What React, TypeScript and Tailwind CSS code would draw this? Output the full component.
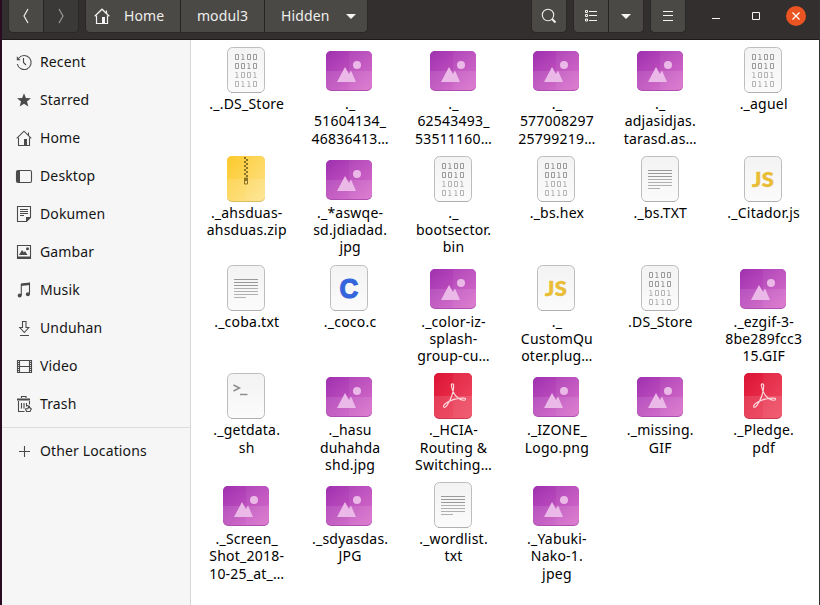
import React from "react";

type Kind = "bin" | "img" | "zip" | "txt" | "js" | "c" | "sh" | "pdf";

type FileItem = { kind: Kind; lines: string[] };

const files: FileItem[] = [
  { kind: "bin", lines: ["._.DS_Store"] },
  { kind: "img", lines: ["._", "51604134_", "46836413…"] },
  { kind: "img", lines: ["._", "62543493_", "53511160…"] },
  { kind: "img", lines: ["._", "577008297", "25799219…"] },
  { kind: "img", lines: ["._", "adjasidjas.", "tarasd.as…"] },
  { kind: "bin", lines: ["._aguel"] },
  { kind: "zip", lines: ["._ahsduas-", "ahsduas.zip"] },
  { kind: "img", lines: ["._*aswqe-", "sd.jdiadad.", "jpg"] },
  { kind: "bin", lines: ["._", "bootsector.", "bin"] },
  { kind: "bin", lines: ["._bs.hex"] },
  { kind: "txt", lines: ["._bs.TXT"] },
  { kind: "js", lines: ["._Citador.js"] },
  { kind: "txt", lines: ["._coba.txt"] },
  { kind: "c", lines: ["._coco.c"] },
  { kind: "img", lines: ["._color-iz-", "splash-", "group-cu…"] },
  { kind: "js", lines: ["._", "CustomQu", "oter.plug…"] },
  { kind: "bin", lines: [".DS_Store"] },
  { kind: "img", lines: ["._ezgif-3-", "8be289fcc3", "15.GIF"] },
  { kind: "sh", lines: ["._getdata.", "sh"] },
  { kind: "img", lines: ["._hasu", "duhahda", "shd.jpg"] },
  { kind: "pdf", lines: ["._HCIA-", "Routing &", "Switching…"] },
  { kind: "img", lines: ["._IZONE_", "Logo.png"] },
  { kind: "img", lines: ["._missing.", "GIF"] },
  { kind: "pdf", lines: ["._Pledge.", "pdf"] },
  { kind: "img", lines: ["._Screen_", "Shot_2018-", "10-25_at_…"] },
  { kind: "img", lines: ["._sdyasdas.", "JPG"] },
  { kind: "txt", lines: ["._wordlist.", "txt"] },
  { kind: "img", lines: ["._Yabuki-", "Nako-1.", "jpeg"] },
];

const zero = "M0 0h3v5h-3z";
const one = "M0 0h1.5v5M0 5h3";

function Bits() {
  const rows = ["0100", "0010", "1001", "0110"];
  return (
    <g fill="none" strokeWidth="1">
      {rows.map((row, r) =>
        row.split("").map((b, c) => (
          <path
            key={`${r}-${c}`}
            d={b === "0" ? zero : one}
            stroke={r < 2 ? "#9a9a9a" : "#b4b4b4"}
            transform={`translate(${13.5 + c * 6} ${8.5 + r * 9})`}
          />
        ))
      )}
    </g>
  );
}

function FileIcon({ kind }: { kind: Kind }) {
  if (kind === "img") {
    return (
      <svg width="48" height="48" viewBox="0 0 48 48" className="block">
        <defs>
          <linearGradient id="pic" x1="0" y1="0" x2="1" y2="1">
            <stop offset="0" stopColor="#9f31b0" />
            <stop offset="1" stopColor="#d968c9" />
          </linearGradient>
        </defs>
        <rect x="1" y="5" width="46" height="40" rx="5" fill="#ad4fae" />
        <rect x="1" y="5" width="46" height="39" rx="5" fill="url(#pic)" />
        <path d="M1 25h46v14a5 5 0 0 1-5 5h-36a5 5 0 0 1-5-5z" fill="#fff" opacity=".1" />
        <path d="M24 5h18a5 5 0 0 1 5 5v29a5 5 0 0 1-5 5h-18z" fill="#fff" opacity=".05" />
        <path d="M12 36l8-15 4 7 2-3.500 5 11.500z" fill="#ebb9e8" />
        <circle cx="32" cy="19" r="4" fill="#ebb9e8" />
      </svg>
    );
  }
  const colored = kind === "zip" || kind === "pdf";
  return (
    <svg width="48" height="48" viewBox="0 0 48 48" className="block">
      <defs>
        <linearGradient id="zipg" x1="0" y1="0" x2="1" y2="1">
          <stop offset="0" stopColor="#fdc92b" />
          <stop offset="1" stopColor="#fde283" />
        </linearGradient>
        <linearGradient id="pdfg" x1="0" y1="0" x2="1" y2="1">
          <stop offset="0" stopColor="#dc1434" />
          <stop offset="1" stopColor="#f0405a" />
        </linearGradient>
        <linearGradient id="doc" x1="0" y1="0" x2="0" y2="1">
          <stop offset="0" stopColor="#f3f3f3" />
          <stop offset="1" stopColor="#fbfbfb" />
        </linearGradient>
      </defs>
      {colored ? (
        <>
          <rect x="5" y="1" width="38" height="46" rx="5" fill={kind === "zip" ? "#d9bd62" : "#cc3a4e"} />
          <rect x="5" y="1" width="38" height="45" rx="5" fill={kind === "zip" ? "url(#zipg)" : "url(#pdfg)"} />
          <path d="M5 24h38v17a5 5 0 0 1-5 5h-28a5 5 0 0 1-5-5z" fill="#fff" opacity=".12" />
          <path d="M24 1h14a5 5 0 0 1 5 5v35a5 5 0 0 1-5 5h-14z" fill="#fff" opacity=".05" />
        </>
      ) : (
        <>
          <rect x="5.500" y="1.500" width="37" height="45" rx="5" fill="url(#doc)" stroke="#bdbdbd" />
          <path d="M9 46.500h30" stroke="#b0b0b0" />
        </>
      )}
      {kind === "bin" && <Bits />}
      {kind === "txt" && (
        <g fill="none">
          <path d="M12 15.500h24M12 18.500h24M12 21.500h24" stroke="#999" />
          <path d="M12 24.500h24M12 27.500h24M12 30.500h24M12 33.500h12" stroke="#b0b0b0" />
        </g>
      )}
      {kind === "zip" && (
        <g>
          {[2, 4, 6, 8, 10, 12, 14, 16, 18, 20].map((y, i) => (
            <rect key={y} x={i % 2 ? 24 : 22} y={y} width="2" height="2" fill="#8a7228" />
          ))}
          <path d="M22.500 23h3v6h-3z" fill="none" stroke="#8a7228" />
          <path d="M23 23h2v3h-2z" fill="#8a7228" />
        </g>
      )}
      {kind === "js" && (
        <text x="24" y="31.700" textAnchor="middle" fontSize="21" fontWeight="900" fill="#e9bd35" stroke="#e9bd35" strokeWidth=".5" textLength="22" lengthAdjust="spacingAndGlyphs" className="font-[Lato,sans-serif]">
          JS
        </text>
      )}
      {kind === "c" && (
        <text x="24" y="34" textAnchor="middle" fontSize="28" fontWeight="700" fill="#3465dc" stroke="#3465dc" strokeWidth="1.200" textLength="19" lengthAdjust="spacingAndGlyphs" className="font-['Liberation_Sans',sans-serif]">
          C
        </text>
      )}
      {kind === "sh" && (
        <g fill="none" stroke="#8c8c8c" strokeWidth="1.400">
          <path d="M11.500 13l6 3-6 3" />
          <path d="M18 22.500h7.500" />
        </g>
      )}
      {kind === "pdf" && (
        <path
          d="M24.600 13c-.4-1.700-2.600-1.300-2.200.6c.8 4.400 2.800 9.400 6.500 12.400c2.300 1.700 5 2.700 7 2c1.100-.6.600-1.900-.7-1.900c-6.200-.3-12.700 1.400-18 4.900c-2 1.400-3 2.900-2.500 4c.8 1 2.300-.2 3.400-1.800c3.600-5.500 6-11.200 6.500-17.700z"
          fill="none"
          stroke="#fbd9dc"
          strokeWidth="1.200"
        />
      )}
    </svg>
  );
}

const homePath = (
  <>
    <path d="M.7 8.300L8 1.200l7.300 7.100" />
    <path d="M2.500 7.500v8h11v-8M12.500 2.500v3" />
  </>
);

const sideIcons: Record<string, React.ReactNode> = {
  recent: (
    <>
      <path d="M2.800 4A7 7 0 1 1 1.300 10M7.500 4v4.500l2.500 2.500" />
      <path d="M.8 2.200v4h3.800z" fill="#4a4a4a" stroke="none" />
    </>
  ),
  star: <path d="M8 1.300l1.900 4.700 5 .3-3.900 3.200 1.300 5L8 11.700l-4.300 2.800 1.300-5L1.100 6.300l5-.3z" fill="#4a4a4a" stroke="none" />,
  home: (
    <>
      {homePath}
      <path d="M8 9h3v6h-3z" fill="#4a4a4a" stroke="none" />
    </>
  ),
  desktop: (
    <>
      <rect x=".5" y="2.500" width="15" height="12" rx="1.500" />
      <path d="M1 3h3v11h-3z" fill="#4a4a4a" stroke="none" />
    </>
  ),
  doc: (
    <>
      <path d="M1.500.5h13v11l-4 4h-9z" />
      <path d="M4 3.500h8M4 5.500h8M4 7.500h8M4 9.500h4" />
      <path d="M10 11h5l-5 5z" fill="#4a4a4a" stroke="none" />
    </>
  ),
  image: (
    <>
      <path d="M1.500 1.500h13v13h-13z" />
      <path d="M1 12.500h14v2.500h-14zM3 11l3-5 2 2.500 1-1.500 2.500 4z" fill="#4a4a4a" stroke="none" />
      <circle cx="11.500" cy="4.700" r="1.500" fill="#4a4a4a" stroke="none" />
    </>
  ),
  music: (
    <>
      <path d="M5.300 13V2.500l8.200-1.200v10.500" />
      <path d="M5 1.500l9-1v2.500l-9 1z" fill="#4a4a4a" stroke="none" />
      <circle cx="3.700" cy="13.500" r="2" fill="#4a4a4a" stroke="none" />
      <circle cx="11.900" cy="12.300" r="2" fill="#4a4a4a" stroke="none" />
    </>
  ),
  download: <path d="M6.500 1.500h3.500v6h2.800l-4.500 5-4.500-5h2.700zM4 15.500h9" />,
  video: (
    <>
      <path d="M3.500 2v13M13.500 2v13M3.500 2.500h10M3.500 8.500h10M3.500 14.500h10" />
      <path d="M1.500 2v13M15.500 2v13" />
      <path d="M2.500 2v13M14.500 2v13" strokeDasharray="1 1" />
    </>
  ),
  trash: (
    <>
      <path d="M2.500 5v10.500h6M13.500 5v3.500M5.500 7v5.500M8 7v5.500M10.500 7v3.500M5.500 2V.5h4.500v1.500" />
      <path d="M1 2.500h13v2h-13z" fill="#4a4a4a" stroke="none" />
      <path d="M12.500 10.500l2.800 2.500-1.300 2.500h-3.500l-1-2.500 2.500-.5zM11 9.500l3 1" />
    </>
  ),
  plus: <path d="M8.500 3v11M3 8.500h11" />,
};

const places: [string, string][] = [
  ["recent", "Recent"],
  ["star", "Starred"],
  ["home", "Home"],
  ["desktop", "Desktop"],
  ["doc", "Dokumen"],
  ["image", "Gambar"],
  ["music", "Musik"],
  ["download", "Unduhan"],
  ["video", "Video"],
  ["trash", "Trash"],
];

function Place({ icon, label }: { icon: string; label: string }) {
  return (
    <div className="flex h-[38px] items-center gap-2 pl-[14px] text-[#151515]">
      <svg width="16" height="16" viewBox="0 0 16 16" fill="none" stroke="#4a4a4a" strokeWidth="1.100" className="shrink-0 overflow-visible">
        {sideIcons[icon]}
      </svg>
      <span>{label}</span>
    </div>
  );
}

const btn = "flex items-center justify-center bg-[#4b4946] h-full";
const group = "flex h-8 gap-px overflow-hidden rounded-b-[4px] bg-[#262424] shadow-[0_0_0_1px_#2a2828]";

export default function App() {
  return (
    <div className="flex h-[605px] w-[820px] flex-col overflow-hidden border-r border-l-2 border-r-[#333] border-l-[#2a0c20] bg-white font-['Noto_Sans',sans-serif] text-[14px] leading-[17.300px] tracking-[0.130px]">
      <header className="flex h-10 shrink-0 items-start border-b border-[#1c1a1a] bg-[#332f2f] pl-[7px] text-[#eeeeec]">
        <div className={group}>
          <div className={`${btn} w-[34px]`}>
            <svg width="16" height="18" viewBox="0 0 16 18" fill="none" stroke="#eee" strokeWidth="1.200">
              <path d="M10 2L6 9l4 7" />
            </svg>
          </div>
          <div className="flex h-full w-[34px] items-center justify-center bg-[#3b3838]">
            <svg width="16" height="18" viewBox="0 0 16 18" fill="none" stroke="#999" strokeWidth="1.200">
              <path d="M6 2l4 7-4 7" />
            </svg>
          </div>
        </div>
        <div className={`${group} ml-2`}>
          <div className="flex h-full w-[94px] items-center gap-[14px] bg-[#4b4946] pl-2">
            <svg width="16" height="16" viewBox="0 0 16 16" fill="none" stroke="#f4f4f4" strokeWidth="1.200" className="overflow-visible">
              {homePath}
              <path d="M8 9h3v6h-3z" fill="#f4f4f4" stroke="none" />
            </svg>
            <span>Home</span>
          </div>
          <div className={`${btn} w-[83px]`}>modul3</div>
          <div className="flex h-full w-[102px] items-center justify-between bg-[#4b4946] pr-[11px] pl-4">
            <span>Hidden</span>
            <svg width="10" height="5" viewBox="0 0 10 5" fill="#f4f4f4">
              <path d="M0 0h10L5 5z" />
            </svg>
          </div>
        </div>
        <div className={`${group} ml-auto`}>
          <div className={`${btn} w-[34px]`}>
            <svg width="16" height="16" viewBox="0 0 16 16" fill="none" stroke="#f0f0f0" strokeWidth="1.100">
              <circle cx="7" cy="7" r="5.700" />
              <path d="M11 11l3.500 3.500" strokeWidth="2" />
            </svg>
          </div>
        </div>
        <div className={`${group} ml-2`}>
          <div className={`${btn} w-[34px]`}>
            <svg width="14" height="12" viewBox="0 0 14 12" fill="none" stroke="#f4f4f4">
              <path d="M5 1.500h8M5 5.500h8M5 10.500h8M1.500.5h2v2h-2zM1.500 4.500h2v2h-2zM1.500 9h2v2h-2z" />
            </svg>
          </div>
          <div className={`${btn} w-[34px]`}>
            <svg width="10" height="5" viewBox="0 0 10 5" fill="#f4f4f4">
              <path d="M0 0h10L5 5z" />
            </svg>
          </div>
        </div>
        <div className={`${group} ml-2`}>
          <div className={`${btn} w-[34px]`}>
            <svg width="10" height="10" viewBox="0 0 10 10" stroke="#f4f4f4">
              <path d="M0 .5h10M0 4.500h10M0 9.500h10" />
            </svg>
          </div>
        </div>
        <div className="ml-[27px] mr-[13px] flex h-8 items-center">
          <svg width="8" height="8" viewBox="0 0 8 8" stroke="#f4f4f4">
            <path d="M0 6.500h8" />
          </svg>
          <svg width="8" height="8" viewBox="0 0 8 8" fill="none" stroke="#f4f4f4" className="ml-8">
            <path d="M.5.5h7v7h-7z" />
          </svg>
          <svg width="20" height="20" viewBox="0 0 20 20" fill="none" className="ml-[26px]">
            <circle cx="10" cy="10" r="10" fill="#e95420" />
            <path d="M6.500 6.500l7 7M13.500 6.500l-7 7" stroke="#fff" strokeWidth="1.300" />
          </svg>
        </div>
      </header>
      <div className="flex min-h-0 flex-1">
        <aside className="w-[189px] shrink-0 border-r border-[#d6d6d6] bg-[#f6f6f6] pt-[3px]">
          {places.map(([icon, label]) => (
            <Place key={label} icon={icon} label={label} />
          ))}
          <div className="my-1 h-px bg-[#dcdcdc]" />
          <Place icon="plus" label="Other Locations" />
        </aside>
        <main className="grid flex-1 auto-rows-[108.750px] grid-cols-[repeat(6,103.400px)] content-start pt-[6px] pl-[3.300px] tracking-[0.220px] text-black">
          {files.map((f, i) => (
            <div key={i} className="flex flex-col items-center">
              <FileIcon kind={f.kind} />
              <div className="mt-px pl-[1.500px] text-center whitespace-nowrap">
                {f.lines.map((l) => (
                  <div key={l}>{l}</div>
                ))}
              </div>
            </div>
          ))}
        </main>
      </div>
    </div>
  );
}
